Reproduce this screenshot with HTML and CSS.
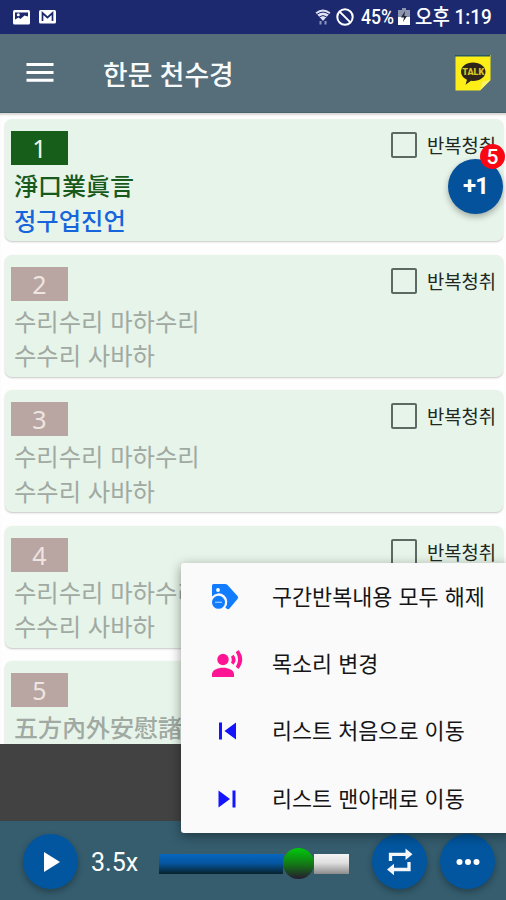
FILE: index.html
```html
<!DOCTYPE html>
<html lang="ko">
<head>
<meta charset="utf-8">
<title>한문 천수경</title>
<link rel="stylesheet" href="styles.css">
</head>
<body>
<div class="screen">
  <div class="status">
    <svg class="status-photo" width="20" height="17" viewBox="0 0 20 17"><rect x="1" y="1" width="17" height="14.5" rx="1.5" fill="#fff"/><path d="M3 3.500h13v4l-3.500-1-4 3.500-2-1.500L3 10.500z" fill="#1c296f"/><circle cx="6.300" cy="5.800" r="1.500" fill="#fff"/></svg>
    <svg class="status-mail" width="18" height="16" viewBox="0 0 18 16"><rect x="0" y="1" width="17" height="13.5" rx="1.5" fill="#fff"/><path d="M3.500 12V4l5 4.500 5-4.500v8" fill="none" stroke="#1c296f" stroke-width="1.700"/></svg>
    <span class="spacer"></span>
    <svg class="status-wifi" width="16" height="18" viewBox="0 0 16 18"><path d="M.5 4.500Q8-1.500 15.500 4.500L8 13z" fill="#dfe3f5"/><path d="M2 6.300q6-4.400 12 0M4.500 8.800q3.500-2.500 7 0" fill="none" stroke="#1c296f" stroke-width="1"/><path d="M5.500 13v3.500M10.500 13v3.500" stroke="#8d96bd" stroke-width="2"/></svg>
    <svg class="status-block" width="18" height="18" viewBox="0 0 18 18"><g fill="none" stroke="#fff" stroke-width="2"><circle cx="9" cy="9" r="7.700"/><path d="M3.600 3.600l10.800 10.800"/></g></svg>
    <span class="status-text percent">45%</span>
    <svg class="status-battery" width="12" height="18" viewBox="0 0 12 18"><path d="M4 0h4v2h4v7H0V2h4z" fill="#8d94ad"/><path d="M0 9h12v8H0z" fill="#fff"/><path d="M7 3L3 9.500h3L5 14l4-6H6.300z" fill="#22263c"/></svg>
    <span class="status-text clock">오후 1:19</span>
  </div>
  <div class="appbar">
    <svg class="hamburger" width="28" height="22" viewBox="0 0 28 22"><path d="M0.500 2.500h27M0.500 10.500h27M0.500 18.200h27" stroke="#fff" stroke-width="3"/></svg>
    <h1 class="title">한문 천수경</h1>
    <div class="talk">
      <svg width="36" height="36" viewBox="0 0 36 36"><path d="M.5 0H35.500V25L25 35.500H.5z" fill="#fcee16"/><path d="M0 0h35v1.500H0z" fill="#275963"/><path d="M35.500 25l-8 1.500L25 35.500z" fill="#fff36b"/><path d="M18 7.500c7 0 12.500 4 12.500 9.300S25 26 18 26l-2-.2-5.500 4 1.500-5c-3.500-1.700-6-4.500-6-8C6 11.500 11 7.500 18 7.500z" fill="#30251b"/><text x="18.300" y="20.400" text-anchor="middle" class="talk-text">TALK</text></svg>
    </div>
  </div>
  <div class="list">
    <div class="card active">
      <div class="lines"><span class="num">1</span><p class="hanja">淨口業眞言</p><p class="hangul">정구업진언</p></div>
      <label class="repeat"><span class="box"></span>반복청취</label>
    </div>
    <div class="card">
      <div class="lines"><span class="num">2</span><p>수리수리 마하수리</p><p>수수리 사바하</p></div>
      <label class="repeat"><span class="box"></span>반복청취</label>
    </div>
    <div class="card">
      <div class="lines"><span class="num">3</span><p>수리수리 마하수리</p><p>수수리 사바하</p></div>
      <label class="repeat"><span class="box"></span>반복청취</label>
    </div>
    <div class="card">
      <div class="lines"><span class="num">4</span><p>수리수리 마하수리</p><p>수수리 사바하</p></div>
      <label class="repeat"><span class="box"></span>반복청취</label>
    </div>
    <div class="card">
      <div class="lines"><span class="num">5</span><p class="hanja">五方內外安慰諸</p></div>
    </div>
  </div>
  <div class="ad"></div>
  <div class="player">
    <div class="round play"><svg width="18" height="22" viewBox="0 0 18 22"><path d="M1 1l16 10L1 21z" fill="#fff"/></svg></div>
    <span class="speed">3.5x</span>
    <div class="slider"><div class="filled"></div><div class="thumb"></div><div class="rest"></div></div>
    <div class="round loop"><svg width="28" height="30" viewBox="0 0 28 30"><g fill="none" stroke="#f4f6fa" stroke-width="3.300"><path d="M4.500 14V7.300H20M23 15v7.500H7"/></g><path d="M19.500 1.500l7 5.700-7 5.700zM8 16.800l-7 5.700 7 5.800z" fill="#f4f6fa"/></svg></div>
    <div class="round more"><svg width="24" height="8" viewBox="0 0 24 8"><g fill="#fff"><circle cx="3.500" cy="4" r="3"/><circle cx="12" cy="4" r="3"/><circle cx="20.500" cy="4" r="3"/></g></svg></div>
  </div>
  <div class="fab">+1<span class="badge">5</span></div>
  <div class="menu">
    <div class="item"><span class="icon tag"><svg width="28" height="28" viewBox="0 0 28 28"><path d="M2.500 1H14q1.500 0 2.500 1L26.500 13q1.300 1.500 0 3L18.500 25.500q-1.500 1.300-3 0L14.300 24.500A7.700 7.700 0 0 0 1 13.500V2.500Q1 1 2.500 1z" fill="#127cff"/><circle cx="7" cy="7" r="1.900" fill="#fff"/><circle cx="7.500" cy="19.300" r="6.500" fill="#127cff"/><path d="M4 19.300h7" stroke="#9cc8ff" stroke-width="1.300"/></svg></span><span class="label">구간반복내용 모두 해제</span></div>
    <div class="item"><span class="icon"><svg width="32" height="28" viewBox="0 0 32 28"><g fill="#ff1593"><circle cx="12" cy="9.500" r="5.700"/><path d="M1 27v-3c0-4 5.500-6.300 11-6.300S23 20 23 24v3z"/><path d="M20 6.800l2.500-2q4.300 5 0 10l-2.500-2q1.500-3 0-6zM24.800 2.300L27.500 0q7.500 9.500 0 19l-2.700-2.300q4.500-7.200 0-14.400z"/></g></svg></span><span class="label">목소리 변경</span></div>
    <div class="item"><span class="icon"><svg width="20" height="18" viewBox="0 0 20 18"><path d="M2 .5h3v17H2zM19 .5v17L7.500 9z" fill="#1414ff"/></svg></span><span class="label">리스트 처음으로 이동</span></div>
    <div class="item"><span class="icon"><svg width="20" height="18" viewBox="0 0 20 18"><path d="M1.500 .5v17L13 9zM15.500 .5h3v17h-3z" fill="#1414ff"/></svg></span><span class="label">리스트 맨아래로 이동</span></div>
  </div>
</div>
</body>
</html>
```

FILE: styles.css
```css
* { box-sizing: border-box; }
body { margin: 0; font-family: "Noto Sans CJK KR", sans-serif; }
h1, p { margin: 0; }
svg { display: block; flex: none; }

.screen {
  position: relative;
  width: 506px;
  height: 900px;
  overflow: hidden;
  display: flex;
  flex-direction: column;
  background: #fefefe;
}

.status {
  height: 34px;
  flex: none;
  display: flex;
  align-items: center;
  padding: 0 12px;
  background: #1c296f;
  color: #fff;
}
.status-mail { margin-left: 7px; }
.spacer { flex: 1; }
.status-block { margin-left: 5px; }
.status-text {
  font: 500 21px/34px Roboto, "Noto Sans CJK KR", sans-serif;
  white-space: nowrap;
  transform: scaleX(.84);
  transform-origin: left;
}
.percent { width: 33px; margin-left: 7px; }
.status-battery { margin-left: 4px; }
.clock { margin-left: 5px; width: 79px; transform: scaleX(.9); }

.appbar {
  height: 79px;
  flex: none;
  display: flex;
  align-items: center;
  padding: 0 15px 0 26px;
  background: #566e7a;
  border-bottom: 1px solid #48636c;
}
.title { margin: 2px 0 0 49px; font-size: 26.800px; line-height: 40px; font-weight: 500; color: #f8fbfc; white-space: nowrap; }
.talk { margin-left: auto; }
.talk-text { font: 900 9px Roboto, sans-serif; fill: #d8c822; }

.list {
  height: 631px;
  flex: none;
  overflow: hidden;
  display: flex;
  flex-direction: column;
  gap: 13.600px;
  padding: 6px 3px 0 5px;
  box-shadow: inset 0 3px 2px -1px #d9d6d4;
}
.card {
  height: 122px;
  flex: none;
  display: flex;
  justify-content: space-between;
  align-items: flex-start;
  padding: 12px 7px 0 6px;
  border-radius: 7px;
  background: #e7f4e9;
  box-shadow: 0 1px 2px rgba(0, 0, 0, .22);
  color: #a0a9a2;
}
.lines { font-size: 24.300px; line-height: 34.500px; }
.lines p { padding-left: 3px; white-space: nowrap; }
.num {
  display: block;
  width: 57px;
  height: 34px;
  margin-bottom: 3px;
  background: #b9a6a3;
  color: #eee4e1;
  font: 25px/35px "Noto Sans", sans-serif;
  text-align: center;
}
.hanja { font-size: 24px; font-weight: 500; }
.active .num { background: #185e1b; color: #eef6ee; }
.active .hanja { color: #185a1c; }
.active .hangul { color: #1765dc; font-weight: 500; }
.repeat {
  display: flex;
  align-items: center;
  gap: 10px;
  height: 28px;
  font-size: 18.800px;
  line-height: 28px;
  color: #202822;
  white-space: nowrap;
}
.box { width: 26px; height: 26px; border: 2.500px solid #5d6a61; border-radius: 2px; }

.ad { height: 77px; flex: none; background: #424242; }
.player {
  height: 79px;
  flex: none;
  display: flex;
  align-items: center;
  padding: 2px 11px 0 23px;
  background: #355d6e;
}
.round {
  width: 55px;
  height: 55px;
  flex: none;
  display: flex;
  align-items: center;
  justify-content: center;
  border-radius: 50%;
  background: #02569f;
  box-shadow: 0 3px 6px rgba(0, 0, 0, .3);
}
.play svg { margin-left: 3px; }
.speed { width: 56px; margin: 2px 0 0 13px; font: 25px/32px Roboto, sans-serif; color: #fff; }
.slider { display: flex; align-items: center; margin: 4px 0 0 12px; width: 190px; }
.filled { width: 124px; height: 20px; background: linear-gradient(#0867bf, #0556a2 45%, #08232b); }
.thumb { width: 31px; height: 31px; flex: none; border-radius: 50%; background: linear-gradient(#00c90c, #137b15 50%, #251b30); }
.rest { flex: 1; height: 20px; background: linear-gradient(#f4f4f4, #dedede 45%, #8b8b8b); }
.loop { margin-left: 23px; }
.more { margin-left: 13px; }

.fab {
  position: absolute;
  left: 448px;
  top: 159px;
  width: 55px;
  height: 55px;
  border-radius: 50%;
  background: #04529c;
  box-shadow: 0 3px 6px rgba(0, 0, 0, .3);
  color: #fff;
  font: 700 24px/55px Roboto, sans-serif;
  letter-spacing: -1px;
  text-align: center;
}
.badge {
  position: absolute;
  left: 32px;
  top: -15px;
  width: 25px;
  height: 25px;
  border-radius: 50%;
  background: #fa0714;
  font: 500 21px/27px Roboto, sans-serif;
  letter-spacing: 0;
}
.menu {
  position: absolute;
  left: 181px;
  top: 563px;
  width: 330px;
  height: 270px;
  border-radius: 3px;
  background: #fafafa;
  box-shadow: 0 3px 12px rgba(0, 0, 0, .4);
}
.item {
  height: 67.300px;
  display: flex;
  align-items: center;
  font-size: 21.800px;
  line-height: 32px;
  color: #151515;
  white-space: nowrap;
}
.icon { width: 91px; flex: none; display: flex; justify-content: center; }
.tag { padding-right: 4px; }
.label { padding-bottom: 2px; }
```
